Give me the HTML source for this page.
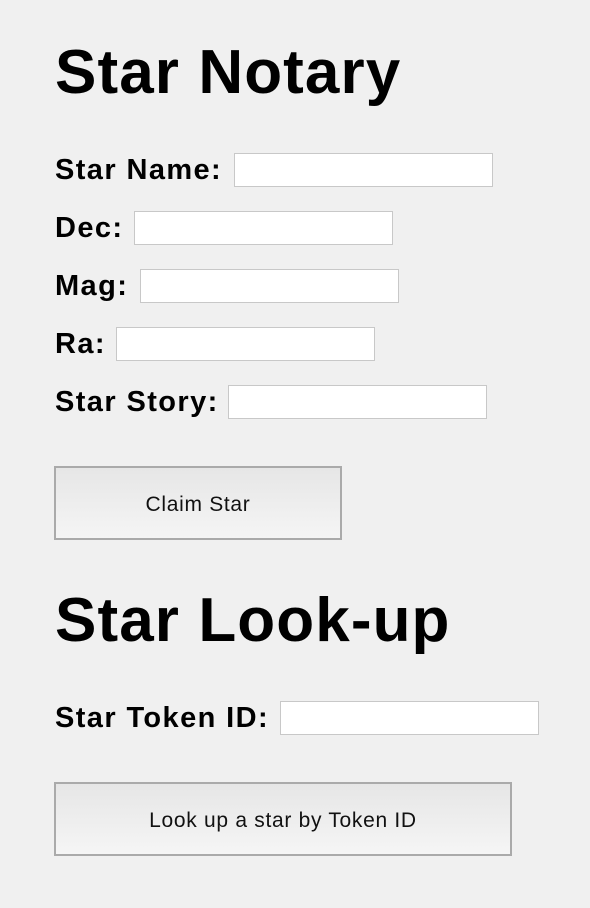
<!DOCTYPE html>
<html><head><style>
body{margin:0;background:#f0f0f0;width:590px;height:908px;position:relative;overflow:hidden;font-family:"Liberation Sans",Arial,sans-serif;color:#000}
h1{position:absolute;margin:0;font-size:62px;font-weight:bold;left:55px;line-height:1;letter-spacing:1.1px;white-space:nowrap}
.l{position:absolute;left:55px;font-size:29px;font-weight:bold;line-height:34px;letter-spacing:1.4px;white-space:nowrap}
.i{position:absolute;height:32px;width:257px;background:#fff;border:1px solid #c8c8c8}
.b{position:absolute;left:54px;border:2px solid #aaa;background:linear-gradient(#e6e6e6,#f5f5f5);font-size:21px;text-align:center;color:#111;box-sizing:border-box;letter-spacing:0.7px;white-space:nowrap}
</style></head><body>
<h1 style="top:42px">Star Notary</h1>
<div class="l" style="top:153px">Star Name:</div><div class="i" style="left:234px;top:153px"></div>
<div class="l" style="top:211px">Dec:</div><div class="i" style="left:134px;top:211px"></div>
<div class="l" style="top:269px">Mag:</div><div class="i" style="left:140px;top:269px"></div>
<div class="l" style="top:327px">Ra:</div><div class="i" style="left:116px;top:327px"></div>
<div class="l" style="top:385px">Star Story:</div><div class="i" style="left:228px;top:385px"></div>
<div class="b" style="top:466px;width:288px;height:74px;line-height:74px">Claim Star</div>
<h1 style="top:590px">Star Look-up</h1>
<div class="l" style="top:701px">Star Token ID:</div><div class="i" style="left:280px;top:701px"></div>
<div class="b" style="top:782px;width:458px;height:74px;line-height:74px">Look up a star by Token ID</div>
</body></html>
